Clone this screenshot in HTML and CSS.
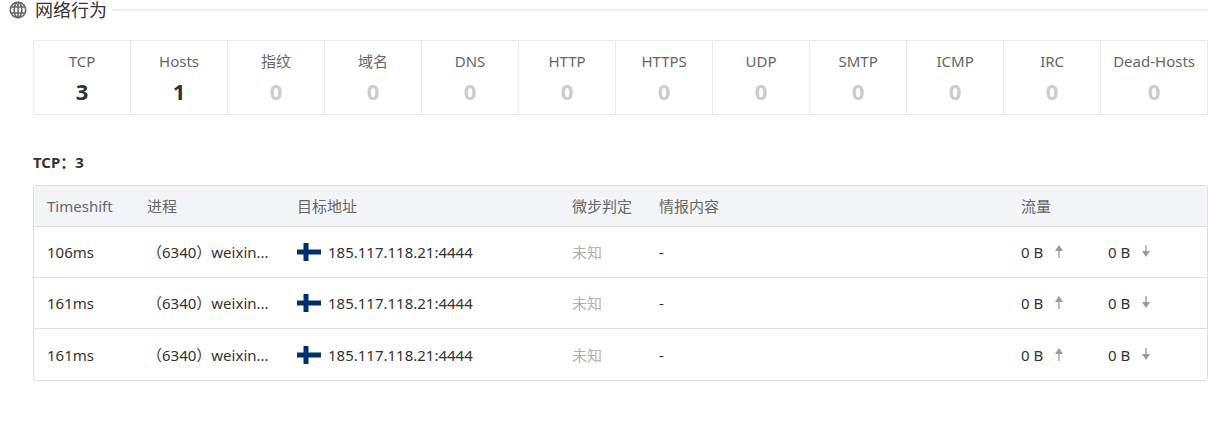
FILE: index.html
```html
<!DOCTYPE html>
<html lang="zh-CN">
<head>
  <meta charset="UTF-8">
  <title>网络行为</title>
  <link rel="stylesheet" href="styles.css">
</head>
<body>
  <svg class="sprite" aria-hidden="true">
    <symbol id="flag-fi" viewBox="0 0 24 18">
      <rect width="24" height="18" fill="#fff"/>
      <path d="M0 6.5h24v5H0z" fill="#002f6c"/>
      <path d="M6.5 0h5v18h-5z" fill="#002f6c"/>
    </symbol>
    <symbol id="arrow-up" viewBox="0 0 8 14">
      <path d="M3 5h2v8H3z" fill="#bbb"/>
      <path d="M4 0l4 6H0z" fill="#999"/>
    </symbol>
    <symbol id="arrow-down" viewBox="0 0 8 14">
      <path d="M3 0h2v8H3z" fill="#bbb"/>
      <path d="M4 12L0 6h8z" fill="#999"/>
    </symbol>
  </svg>

  <div class="section-title">
    <svg class="globe" viewBox="0 0 18 18" fill="none" stroke="#666" stroke-width="1.6">
      <circle cx="9" cy="9" r="7.7"/>
      <ellipse cx="9" cy="9" rx="3.8" ry="7.7"/>
      <path d="M9 1.3v15.4M2.2 6h13.6M2.2 12h13.6"/>
    </svg>
    <h1>网络行为</h1>
    <span class="line"></span>
  </div>

  <div class="content">
    <ul class="stats">
      <li class="active">TCP<b>3</b></li>
      <li class="active">Hosts<b>1</b></li>
      <li>指纹<b>0</b></li>
      <li>域名<b>0</b></li>
      <li>DNS<b>0</b></li>
      <li>HTTP<b>0</b></li>
      <li>HTTPS<b>0</b></li>
      <li>UDP<b>0</b></li>
      <li>SMTP<b>0</b></li>
      <li>ICMP<b>0</b></li>
      <li>IRC<b>0</b></li>
      <li class="wide">Dead-Hosts<b>0</b></li>
    </ul>

    <h2>TCP：3</h2>

    <div class="table-box">
      <table>
        <colgroup>
          <col class="col-time">
          <col class="col-process">
          <col class="col-address">
          <col class="col-verdict">
          <col>
          <col class="col-traffic">
        </colgroup>
        <thead>
          <tr>
            <th>Timeshift</th>
            <th>进程</th>
            <th>目标地址</th>
            <th>微步判定</th>
            <th>情报内容</th>
            <th>流量</th>
          </tr>
        </thead>
        <tbody>
          <tr>
            <td>106ms</td>
            <td>（6340）weixin...</td>
            <td><div class="address"><svg class="flag"><use href="#flag-fi"/></svg>185.117.118.21:4444</div></td>
            <td class="unknown">未知</td>
            <td>-</td>
            <td><div class="traffic"><span>0 B<svg class="arrow"><use href="#arrow-up"/></svg></span><span>0 B<svg class="arrow"><use href="#arrow-down"/></svg></span></div></td>
          </tr>
          <tr>
            <td>161ms</td>
            <td>（6340）weixin...</td>
            <td><div class="address"><svg class="flag"><use href="#flag-fi"/></svg>185.117.118.21:4444</div></td>
            <td class="unknown">未知</td>
            <td>-</td>
            <td><div class="traffic"><span>0 B<svg class="arrow"><use href="#arrow-up"/></svg></span><span>0 B<svg class="arrow"><use href="#arrow-down"/></svg></span></div></td>
          </tr>
          <tr>
            <td>161ms</td>
            <td>（6340）weixin...</td>
            <td><div class="address"><svg class="flag"><use href="#flag-fi"/></svg>185.117.118.21:4444</div></td>
            <td class="unknown">未知</td>
            <td>-</td>
            <td><div class="traffic"><span>0 B<svg class="arrow"><use href="#arrow-up"/></svg></span><span>0 B<svg class="arrow"><use href="#arrow-down"/></svg></span></div></td>
          </tr>
        </tbody>
      </table>
    </div>
  </div>
</body>
</html>
```
FILE: styles.css
```css
* {
  box-sizing: border-box;
}

body {
  margin: 0;
  padding: 0 14px 40px 9px;
  background: #fff;
  color: #333;
  font-family: "Noto Sans", "Noto Sans CJK SC", sans-serif;
  font-size: 15px;
  line-height: 20px;
}

.sprite {
  display: none;
}

.section-title {
  display: flex;
  align-items: center;
}

.globe {
  width: 18px;
  height: 18px;
  margin-right: 8px;
}

h1 {
  margin: 0;
  font-size: 18px;
  font-weight: normal;
  line-height: 20px;
}

.line {
  flex: 1;
  height: 2px;
  margin-left: 6px;
  background: #eee;
}

.content {
  margin: 20px 0 0 24px;
}

.stats {
  display: flex;
  margin: 0;
  padding: 0;
  list-style: none;
  border: 1px solid #e9eaef;
}

.stats li {
  flex: 1;
  height: 73px;
  padding-top: 10px;
  text-align: center;
  color: #666;
  border-right: 1px solid #e9eaef;
}

.stats .wide {
  flex: none;
  padding: 10px 12px 0;
  border-right: none;
}

.stats b {
  display: block;
  margin-top: 6px;
  font-size: 22px;
  line-height: 28px;
  color: #ccc;
}

.stats .active b {
  color: #333;
}

h2 {
  margin: 37px 0 13px;
  font-size: 15px;
  line-height: 20px;
}

.table-box {
  border: 1px solid #dcdfe6;
  border-radius: 3px;
  overflow: hidden;
}

table {
  width: 100%;
  table-layout: fixed;
  border-collapse: separate;
  border-spacing: 0;
}

.col-time {
  width: 100px;
}

.col-process {
  width: 150px;
}

.col-address {
  width: 275px;
}

.col-verdict {
  width: 87px;
}

.col-traffic {
  width: 199px;
}

th,
td {
  padding: 0 0 0 13px;
  text-align: left;
  white-space: nowrap;
  border-bottom: 1px solid #dcdfe6;
}

th {
  height: 41px;
  font-weight: normal;
  color: #666;
  background: #f2f4f8;
}

td {
  height: 51px;
}

tbody tr:last-child td {
  border-bottom: none;
}

.address,
.traffic,
.traffic span {
  display: flex;
  align-items: center;
}

.flag {
  width: 24px;
  height: 18px;
  margin-right: 7px;
}

.unknown {
  color: #b5b0a5;
}

.traffic span {
  width: 87px;
}

.arrow {
  width: 8px;
  height: 14px;
  margin-left: 12px;
}
```
